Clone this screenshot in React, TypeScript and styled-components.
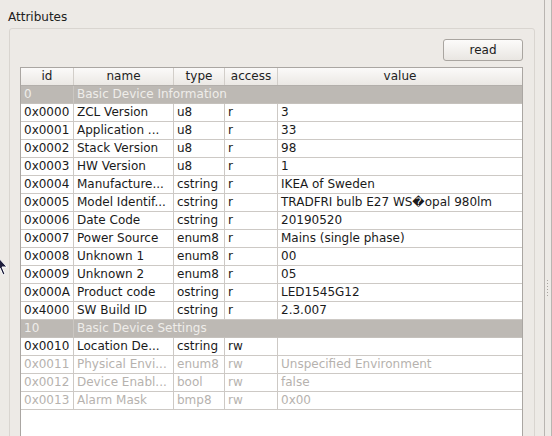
import React from 'react';
import styled, { createGlobalStyle } from 'styled-components';

const GlobalStyle = createGlobalStyle`
	html, body {
		margin: 0;
		padding: 0;
		background: #edeae6;
	}
	body {
		font-family: 'DejaVu Sans', 'Liberation Sans', sans-serif;
		font-size: 12px;
		color: #1c1c1c;
	}
`;

interface Attribute {
	id: string;
	name: string;
	type: string;
	access: string;
	value: string;
	disabled?: boolean;
}

interface Cluster {
	id: string;
	name: string;
	attributes: Attribute[];
}

const clusters: Cluster[] = [
	{
		id: '0',
		name: 'Basic Device Information',
		attributes: [
			{ id: '0x0000', name: 'ZCL Version', type: 'u8', access: 'r', value: '3' },
			{ id: '0x0001', name: 'Application ...', type: 'u8', access: 'r', value: '33' },
			{ id: '0x0002', name: 'Stack Version', type: 'u8', access: 'r', value: '98' },
			{ id: '0x0003', name: 'HW Version', type: 'u8', access: 'r', value: '1' },
			{ id: '0x0004', name: 'Manufacture...', type: 'cstring', access: 'r', value: 'IKEA of Sweden' },
			{ id: '0x0005', name: 'Model Identif...', type: 'cstring', access: 'r', value: 'TRADFRI bulb E27 WS\uFFFDopal 980lm' },
			{ id: '0x0006', name: 'Date Code', type: 'cstring', access: 'r', value: '20190520' },
			{ id: '0x0007', name: 'Power Source', type: 'enum8', access: 'r', value: 'Mains (single phase)' },
			{ id: '0x0008', name: 'Unknown 1', type: 'enum8', access: 'r', value: '00' },
			{ id: '0x0009', name: 'Unknown 2', type: 'enum8', access: 'r', value: '05' },
			{ id: '0x000A', name: 'Product code', type: 'ostring', access: 'r', value: 'LED1545G12' },
			{ id: '0x4000', name: 'SW Build ID', type: 'cstring', access: 'r', value: '2.3.007' }
		]
	},
	{
		id: '10',
		name: 'Basic Device Settings',
		attributes: [
			{ id: '0x0010', name: 'Location De...', type: 'cstring', access: 'rw', value: '' },
			{ id: '0x0011', name: 'Physical Envi...', type: 'enum8', access: 'rw', value: 'Unspecified Environment', disabled: true },
			{ id: '0x0012', name: 'Device Enabl...', type: 'bool', access: 'rw', value: 'false', disabled: true },
			{ id: '0x0013', name: 'Alarm Mask', type: 'bmp8', access: 'rw', value: '0x00', disabled: true }
		]
	}
];

const COLUMNS = '53px 100px 51px 53px 1fr';

const Window = styled.div`
	position: relative;
	display: flex;
	width: 552px;
	height: 436px;
	overflow: hidden;
`;

const Pane = styled.div`
	display: flex;
	flex-direction: column;
	width: 544px;
	padding: 0 9px 0 9px;
	box-sizing: border-box;
`;

const Title = styled.div`
	height: 18px;
	line-height: 15px;
	padding-top: 10px;
	margin-left: -1px;
	color: #202020;
`;

const GroupBox = styled.div`
	flex: 1;
	display: flex;
	flex-direction: column;
	margin-bottom: -20px;
	padding: 10px 11px 0 10px;
	border: 1px solid #d9d5d0;
	border-radius: 3px;
	background: #edeae6;
`;

const Toolbar = styled.div`
	display: flex;
	justify-content: flex-end;
	margin-bottom: 6px;
`;

const Button = styled.button`
	width: 80px;
	height: 22px;
	padding: 0;
	font: inherit;
	color: #1c1c1c;
	border: 1px solid #a9a5a0;
	border-radius: 3px;
	background: linear-gradient(#fcfbfa, #e9e6e2);
`;

const Table = styled.div`
	flex: 1;
	background: #ffffff;
	border: 1px solid #aaa6a2;
	border-bottom: none;
`;

const Row = styled.div<{ $disabled?: boolean }>`
	display: grid;
	grid-template-columns: ${COLUMNS};
	height: 18px;
	box-sizing: border-box;
	border-bottom: 1px solid #cdc9c5;
	color: ${(p) => (p.$disabled ? '#b6b2ae' : '#1a1a1a')};
`;

const Cell = styled.div`
	padding-left: 3px;
	line-height: 17px;
	white-space: nowrap;
	overflow: hidden;
	border-right: 1px solid #cdc9c5;
	&:last-child {
		border-right: none;
	}
`;

const HeaderRow = styled(Row)`
	background: linear-gradient(#fbfaf9, #ebe8e4);
	border-bottom: 1px solid #b3afab;
	color: #222;
`;

const HeaderCell = styled(Cell)`
	padding-left: 0;
	text-align: center;
	border-right-color: #d2cec9;
`;

const GroupRow = styled.div`
	display: grid;
	grid-template-columns: 53px 1fr;
	height: 18px;
	box-sizing: border-box;
	background: #bdb9b4;
	color: #efedea;
	border-bottom: 1px solid #c5c1bc;
`;

const GroupCell = styled(Cell)`
	border-right-color: #cbc7c2;
`;

const Splitter = styled.div`
	position: relative;
	width: 8px;
	border-left: 1px solid #b9b5b1;
	border-right: 1px solid #b9b5b1;
	box-sizing: border-box;
`;

const Grip = styled.div`
	position: absolute;
	left: 2px;
	top: 280px;
	width: 1px;
	height: 16px;
	background: repeating-linear-gradient(#a9a5a1 0 1px, transparent 1px 3px);
`;

const Cursor = styled.svg`
	position: absolute;
	left: -5px;
	top: 254px;
`;

export default function App() {
	return (
		<Window>
			<GlobalStyle />
			<Pane>
				<Title>Attributes</Title>
				<GroupBox>
					<Toolbar>
						<Button>read</Button>
					</Toolbar>
					<Table>
						<HeaderRow>
							<HeaderCell>id</HeaderCell>
							<HeaderCell>name</HeaderCell>
							<HeaderCell>type</HeaderCell>
							<HeaderCell>access</HeaderCell>
							<HeaderCell>value</HeaderCell>
						</HeaderRow>
						{clusters.map((cluster) => (
							<React.Fragment key={cluster.id}>
								<GroupRow>
									<GroupCell>{cluster.id}</GroupCell>
									<GroupCell>{cluster.name}</GroupCell>
								</GroupRow>
								{cluster.attributes.map((attr) => (
									<Row key={attr.id} $disabled={attr.disabled}>
										<Cell>{attr.id}</Cell>
										<Cell>{attr.name}</Cell>
										<Cell>{attr.type}</Cell>
										<Cell>{attr.access}</Cell>
										<Cell>{attr.value}</Cell>
									</Row>
								))}
							</React.Fragment>
						))}
					</Table>
				</GroupBox>
			</Pane>
			<Splitter>
				<Grip />
			</Splitter>
			<Cursor width="14" height="24" viewBox="0 0 14 24">
				<path d="M1 1 L1 18 L5 14 L8 21 L10 20 L7 13 L12 13 Z" fill="#1e1e3c" stroke="#ffffff" strokeWidth="1" />
			</Cursor>
		</Window>
	);
}
